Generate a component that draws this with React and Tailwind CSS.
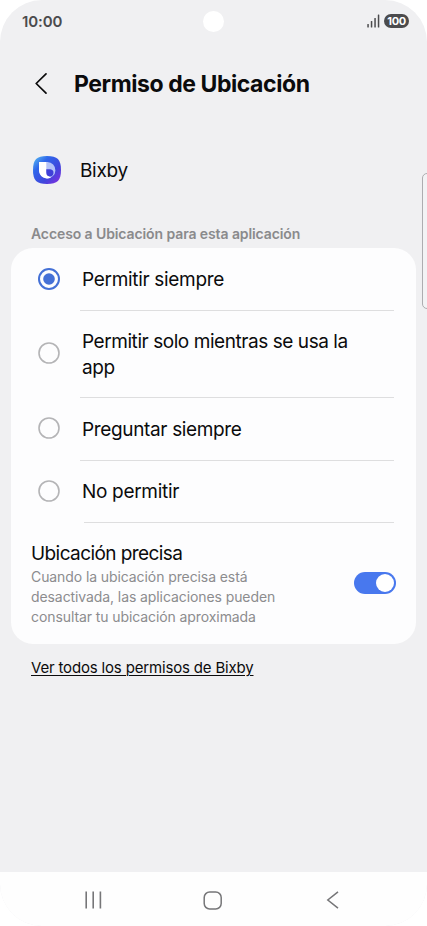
const options = [
  { label: 'Permitir siempre', selected: true, row: 'h-[63px]', line: 'ml-[69px]', text: 'pt-[2px] tracking-[-0.31px]' },
  { label: 'Permitir solo mientras se usa la app', row: 'h-[87px]', line: 'ml-[69px]', text: 'pt-[2px] tracking-[-0.44px]' },
  { label: 'Preguntar siempre', row: 'h-[63px]', line: 'ml-[69px]', text: 'pt-[2px] tracking-[-0.35px]' },
  { label: 'No permitir', row: 'h-[62px]', line: 'ml-[73px]', text: 'tracking-[-0.31px]' },
]

function StatusBar() {
  return (
    <div className="relative flex h-[42px] items-center justify-between pr-[18px] pl-[22px] text-[#4b4b4d]">
      <span className="pt-px text-[15px] leading-5 font-semibold tracking-[-0.1px]">10:00</span>
      <span className="absolute top-[11px] left-[203px] h-[21px] w-[21px] rounded-full bg-white" />
      <div className="flex items-center gap-[4px]">
        <svg width="13" height="14" viewBox="0 0 13 14" fill="currentColor">
          <rect x="0.3" y="10" width="1.5" height="3.6" rx="0.5" />
          <rect x="3.8" y="7" width="1.5" height="6.6" rx="0.5" />
          <rect x="7.3" y="4" width="1.5" height="9.6" rx="0.5" />
          <rect x="10.8" y="0.6" width="1.5" height="13" rx="0.5" />
        </svg>
        <span className="flex h-[14px] w-[25px] items-center justify-center rounded-full bg-[#4b4b4d] text-[11px] leading-none font-bold tracking-[-0.4px] text-white">
          100
        </span>
      </div>
    </div>
  )
}

function BixbyIcon() {
  return (
    <svg width="28" height="28" viewBox="0 0 28 28">
      <defs>
        <linearGradient id="bixby-bg" x1="0" y1="0" x2="1" y2="1">
          <stop offset="0" stopColor="#5cc4f2" />
          <stop offset="0.3" stopColor="#2f66ea" />
          <stop offset="0.65" stopColor="#4046dc" />
          <stop offset="1" stopColor="#8a2be0" />
        </linearGradient>
      </defs>
      <path
        d="M14 0C24.5 0 28 3.5 28 14S24.5 28 14 28 0 24.5 0 14 3.5 0 14 0Z"
        fill="url(#bixby-bg)"
      />
      <path d="M6 6H14.5a8.200 8.200 0 1 1-8.500 8.200Z" fill="#b4c3f8" />
      <path d="M6 6H13.300v9c0 3 1.500 5 4.700 6.600A8.200 8.200 0 0 1 6 14.200Z" fill="#fff" />
      <path d="M13.300 13.200h4a3.600 3.600 0 1 1-4 3.600Z" fill="#3f3fd8" />
    </svg>
  )
}

function Radio({ selected }) {
  return (
    <svg className={selected ? 'shrink-0 text-[#4470d6]' : 'mb-[2px] shrink-0 text-[#b4b4b6]'} width="22" height="22" viewBox="0 0 22 22">
      <circle cx="11" cy="11" r="10" fill="none" stroke="currentColor" strokeWidth={selected ? 2 : 1.6} />
      {selected && <circle cx="11" cy="11" r="5.800" fill="currentColor" />}
    </svg>
  )
}

function Option({ label, selected, row, line, text }) {
  return (
    <div className={`flex flex-col ${row}`}>
      <div className="flex flex-1 items-center pr-[48px] pl-[27px]">
        <Radio selected={selected} />
        <span className={`ml-[22px] text-[19px] leading-[26px] ${text}`}>{label}</span>
      </div>
      <div className={`mr-[22px] h-px bg-[#dededf] ${line}`} />
    </div>
  )
}

function NavBar() {
  return (
    <nav className="flex h-[54px] items-center bg-[#fefefe] pt-[2px] pl-[84px] text-[#767678]">
      <svg width="18" height="18" viewBox="0 0 18 18" stroke="currentColor" strokeWidth="1.6">
        <path d="M2.200 .5v17M9.200 .5v17M16.400 .5v17" />
      </svg>
      <svg className="ml-[101px]" width="19" height="19" viewBox="0 0 19 19" fill="none" stroke="currentColor" strokeWidth="1.5">
        <rect x="1.200" y="1" width="17" height="17" rx="5.500" />
      </svg>
      <svg className="ml-[104px]" width="13" height="18" viewBox="0 0 13 18" fill="none" stroke="currentColor" strokeWidth="1.5">
        <path d="M12 .8 1.800 9l10.200 8.200" />
      </svg>
    </nav>
  )
}

export default function App() {
  return (
    <div className="h-[926px] w-[427px] bg-white font-['Inter',sans-serif] text-[#0b0b0c]">
      <div className="relative flex h-full flex-col overflow-hidden rounded-[42px] bg-[#f0f0f2]">
        <StatusBar />

        <header className="flex h-[82px] items-center pl-[35px]">
          <svg width="12" height="21" viewBox="0 0 12 21" fill="none" stroke="currentColor" strokeWidth="1.7" strokeLinecap="round" strokeLinejoin="round">
            <path d="M11 .9 1.200 10.500 11 20.100" />
          </svg>
          <h1 className="ml-[27px] pt-px text-[23px] leading-8 font-bold tracking-[-0.43px]">Permiso de Ubicación</h1>
        </header>

        <div className="flex h-[92px] items-center pl-[33px]">
          <BixbyIcon />
          <span className="ml-[19px] pt-[2px] text-[19px] leading-[26px] tracking-[-0.31px]">Bixby</span>
        </div>

        <h2 className="flex h-[32px] items-center pt-[2px] pl-[31px] text-[14px] font-semibold tracking-[-0.1px] text-[#8a8a8c]">
          Acceso a Ubicación para esta aplicación
        </h2>

        <section className="mr-[11px] ml-[11px] h-[396px] rounded-[22px] bg-[#fdfdfe]">
          {options.map((option) => (
            <Option key={option.label} {...option} />
          ))}

          {/* Precise location */}
          <div className="flex h-[120px] items-center justify-between pr-[20px] pl-[20px]">
            <div className="pt-px">
              <p className="text-[19px] leading-[26px] tracking-[-0.58px]">Ubicación precisa</p>
              <p className="w-[260px] text-[14px] leading-5 tracking-[-0.09px] text-[#8c8c8e]">
                Cuando la ubicación precisa está desactivada, las aplicaciones pueden consultar tu ubicación aproximada
              </p>
            </div>
            <span className="flex h-[22px] w-[42px] items-center justify-end rounded-full bg-[#4878ee] pr-[2px]">
              <span className="h-[18px] w-[18px] rounded-full bg-white" />
            </span>
          </div>
        </section>

        <a className="mt-[14px] ml-[31px] w-fit text-[15px] leading-5 tracking-[-0.17px] underline decoration-1 underline-offset-2">
          Ver todos los permisos de Bixby
        </a>

        <div className="flex-1" />
        <NavBar />

        {/* Edge panel handle */}
        <div className="absolute top-[173px] -right-[8px] h-[136px] w-[13px] rounded-[5px] border border-[#adadb0] bg-[#f3f3f5]" />
      </div>
    </div>
  )
}
